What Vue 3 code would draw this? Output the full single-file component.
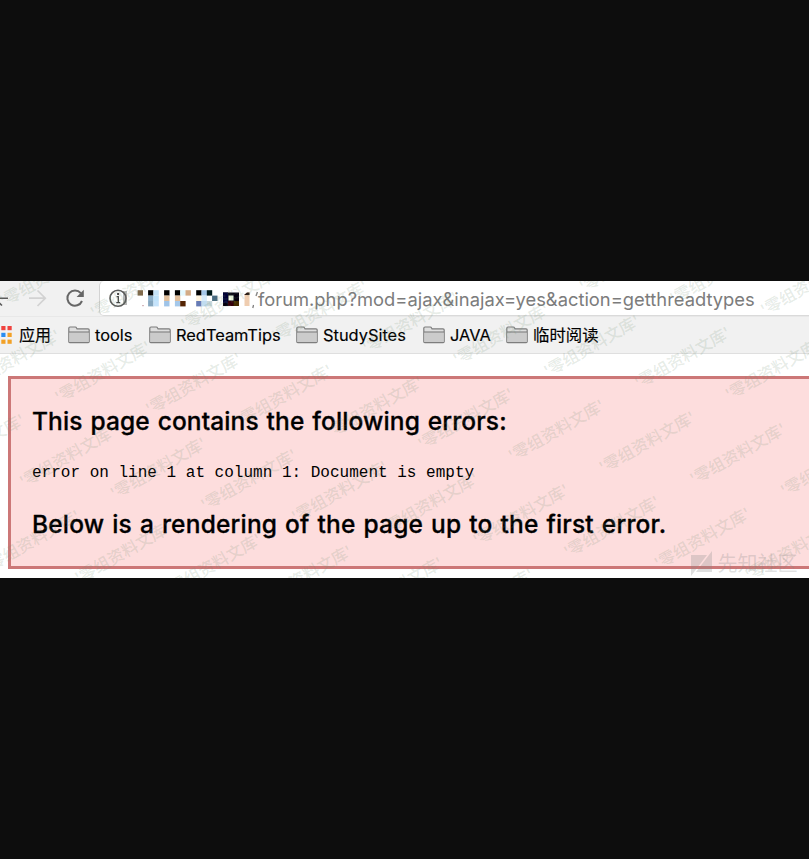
<script setup>
const bookmarks = [
  { name: 'tools', cls: 'b-tools' },
  { name: 'RedTeamTips', cls: 'b-red' },
  { name: 'StudySites', cls: 'b-study' },
  { name: 'JAVA', cls: 'b-java' },
  { name: '临时阅读', cls: 'b-read' },
]
const dots = ['#f0433f', '#f0433f', '#2a8df0', '#f2a127', '#f2a127', '#f2a127']
const dotCells = dots.map((c, i) => ({ c, x: (i % 2) * 6.2, y: Math.floor(i / 2) * 6.8 }))

// Obscured host: [column offset, row, colour]
const mosaic = [
  [0, 0, '#80694b'],
  [10.5, 0, '#000'], [10.5, 1, '#8db0ca'], [10.5, 2, '#86a7bf'],
  [15.8, 0, '#c5e3f8'], [15.8, 1, '#bfe3fb'], [15.8, 2, '#c5e3fb'],
  [26.5, 0, '#000'], [26.5, 1, '#e0be9a'], [26.5, 2, '#9fc4e8'],
  [37.3, 0, '#000'], [37.3, 1, '#e0bc98'], [37.3, 2, '#a5c8ea'],
  [42.6, 0, '#e4f9ff'], [42.6, 2, '#552504'], [47.9, 0, '#d3ab86'],
  [58.6, 0, '#000'], [58.6, 1, '#fff3dd'], [58.6, 2, '#667bb5'],
  [63.9, 0, '#a5c8ea'], [63.9, 1, '#d8ecfb'], [63.9, 2, '#c0dcf0'],
  [69.2, 0, '#001a1c'], [69.2, 2, '#c8d8dc'], [74.5, 1, '#486a80'],
]

// Watermark lattice
const marks = []
for (let r = -3; r <= 4; r++) {
  for (let c = -4; c <= 12; c++) {
    const x = 193.5 + c * 90.7 - r * 35.4
    const y = 102.5 + c * 11.7 + r * 84.5
    if (x > -50 && x < 859 && y > -28 && y < 325) marks.push({ x, y })
  }
}
</script>

<template>
  <main class="stage">
    <section class="browser">
      <div class="toolbar">
        <svg class="nav" width="99" height="36" viewBox="0 0 99 36" fill="none">
          <path d="M-6 17.2H8M-.5 10.500L-6 17.2L2 24.500" stroke="#5b5b5b" stroke-width="1.6" />
          <path d="M29 17.2H45M37.5 9.5L45.3 17.2L37.5 25" stroke="#d2d2d2" stroke-width="1.7" />
          <path d="M80.8 12.2A7.6 7.6 0 1 0 82 20" stroke="#666" stroke-width="2" />
          <path d="M83.8 8.8V16H76.6Z" fill="#666" />
        </svg>
        <div class="address">
          <svg class="host" width="158" height="34" viewBox="0 0 158 34">
            <rect x="23" y="10" width="4" height="14" fill="#b8b8b8" />
            <circle cx="18" cy="17.3" r="8" fill="none" stroke="#5a5a5a" stroke-width="1.6" />
            <path d="M16.6 15.600H18.3V21.6M16.3 21.6H20.2" fill="none" stroke="#444" stroke-width="1.3" />
            <rect x="17.1" y="12" width="2" height="2" fill="#444" />
            <rect v-for="(m, i) in mosaic" :key="i" :x="37.6 + m[0]" :y="9.2 + m[1] * 5.4" width="5.4" height="5.4" :fill="m[2]" />
            <path d="M123 11.5H139V25H123Z" fill="#050010" />
            <path d="M123 11.5H128V22H123Z" fill="#000035" />
            <path d="M128.5 14.5H133.5V19.5H128.5Z" fill="#f5ffe8" />
            <path d="M128 20H133.5V25H128Z" fill="#35000c" />
            <path d="M133.5 20H139V25H133.5Z" fill="#442c00" />
            <path d="M144.5 14L147 11.5H149.5V25H144.5Z" fill="#efcdb0" />
            <path d="M144 14L147 11.5H149.5V14Z" fill="#2b1b15" />
            <path d="M153.5 24L152.8 27" stroke="#777" stroke-width="1.2" />
            <path d="M156 15L157.4 11" stroke="#888" stroke-width="1.4" />
            <rect x="42" y="24" width="2" height="1.2" fill="#d5b8bd" />
          </svg>
          <span class="url">forum.php?mod=ajax&amp;inajax=yes&amp;action=getthreadtypes</span>
        </div>
      </div>
      <div class="bookmarks">
        <svg class="apps" width="12" height="18" viewBox="0 0 12 18">
          <rect v-for="(d, i) in dotCells" :key="i" :x="d.x + 1.3" :y="d.y" width="4.2" height="4.2" :fill="d.c" />
        </svg>
        <span class="label apps-label">应用</span>
        <div v-for="b in bookmarks" :key="b.name" class="bookmark" :class="b.cls">
          <svg class="folder" width="22" height="18" viewBox="0 0 22 18">
            <path d="M.8 15.6V2.2Q.8 1 2 1H7.2Q8.2 1 8.6 2L9 2.8H20Q21.2 2.8 21.2 4V15.6Q21.2 16.6 20.2 16.6H1.8Q.8 16.6.8 15.6Z" fill="#dedede" stroke="#7d7d7d" stroke-width="1.2" />
            <path d="M1.3 6.3H20.7V16H1.3Z" fill="#cbcbcb" />
            <path d="M1 6H21" stroke="#7d7d7d" stroke-width="1.1" />
          </svg>
          <span class="label">{{ b.name }}</span>
        </div>
      </div>
      <div class="page">
        <div class="error-box">
          <h3 class="first">This page contains the following errors:</h3>
          <p>error on line 1 at column 1: Document is empty</p>
          <h3 class="second">Below is a rendering of the page up to the first error.</h3>
        </div>
      </div>
      <svg class="watermark" width="809" height="297" viewBox="0 0 809 297">
        <g class="mark-text">
          <text v-for="(m, i) in marks" :key="i" text-anchor="middle" :transform="`translate(${m.x} ${m.y}) rotate(-29.5)`" y="6">'零组资料文库'</text>
        </g>
        <g class="brand">
          <path d="M691 274H707L691 295ZM712 270V291H696Z" />
          <text x="717.5" y="289.500">先知社区</text>
        </g>
      </svg>
    </section>
  </main>
</template>

<style>
body { background: #0d0d0d; }
</style>

<style scoped>
.stage {
  box-sizing: border-box;
  width: 809px;
  height: 859px;
  padding-top: 281px;
  background: #0d0d0d;
  overflow: hidden;
}
.browser {
  position: relative;
  display: flex;
  flex-direction: column;
  height: 297px;
  background: #fff;
  overflow: hidden;
  font-family: Inter, "Noto Sans CJK SC", sans-serif;
}
.toolbar { display: flex; height: 35px; background: #f1f1f1; }
.nav { flex: none; }
.address {
  box-sizing: border-box;
  display: flex;
  flex: 1;
  height: 35px;
  background: #fff;
  border-left: 1px solid #d3d3d3;
  border-bottom: 1px solid #dadada;
  border-radius: 5px 0 0 5px;
}
.host { flex: none; }
.url {
  font-size: 18.35px;
  line-height: 37px;
  color: #7c7c7c;
  white-space: nowrap;
}
.bookmarks {
  box-sizing: border-box;
  display: flex;
  align-items: center;
  height: 38px;
  padding-bottom: 1px;
  background: #f1f1f1;
  border-top: 1px solid #e8e8e8;
  border-bottom: 1px solid #dfdfdf;
}
.apps { flex: none; }
.label { font-size: 16.4px; line-height: 34px; color: #000; white-space: nowrap; -webkit-text-stroke: 0.15px #000; }
.apps-label { width: 49px; padding-left: 7px; font-size: 16px; }
.bookmark { display: flex; flex: none; align-items: center; gap: 5px; }
.b-tools { width: 81px; }
.b-red { width: 147px; }
.b-study { width: 127px; }
.b-java { width: 83px; }
.page { padding: 22px 0 0 8px; }
.error-box {
  box-sizing: border-box;
  width: 830px;
  height: 193px;
  padding: 23px 0 0 21px;
  border: 3px solid #cc7777;
  background: #fddddd;
  color: #000;
}
h3 { margin: 0; font-size: 24.500px; line-height: 38px; font-weight: 500; white-space: nowrap; -webkit-text-stroke: 0.3px #000; }
.first { letter-spacing: 0.12px; word-spacing: 1.2px; }
.second { letter-spacing: 0.19px; word-spacing: 1.2px; }
p {
  margin: 16px 0 15px;
  font-family: "Liberation Mono", monospace;
  font-size: 16px;
  line-height: 34px;
  letter-spacing: 0.01px;
  white-space: pre;
}
.watermark { position: absolute; inset: 0; pointer-events: none; }
.mark-text { font-size: 16.2px; font-weight: 500; fill: #6e8e70; fill-opacity: 0.18; }
.brand { font-size: 20px; fill: #888; fill-opacity: 0.27; }
</style>
